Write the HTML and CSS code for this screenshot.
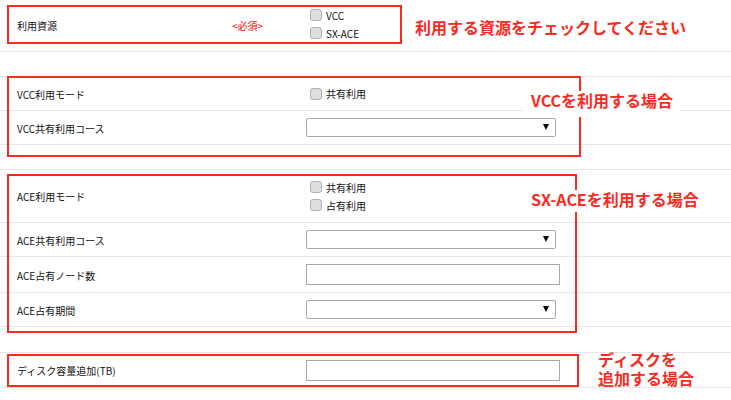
FILE: index.html
```html
<!DOCTYPE html>
<html lang="ja">

<head>
    <meta charset="UTF-8">
    <meta name="viewport" content="width=device-width, initial-scale=1.0">
    <title>利用資源の申請</title>

    <!-- スタイル -->
    <link rel="stylesheet" href="styles.css">
</head>

<body>

    <div class="form">

        <!-- 利用資源 -->
        <section class="group">
            <div class="row row-tall">
                <span class="label">利用資源</span>
                <span class="required">&lt;必須&gt;</span>
                <div class="control checks checks-first">
                    <label class="check"><input type="checkbox">VCC</label>
                    <label class="check"><input type="checkbox">SX-ACE</label>
                </div>
            </div>
            <div class="frame frame-resource"></div>
            <p class="note note-resource">利用する資源をチェックしてください</p>
        </section>

        <!-- VCC -->
        <section class="group">
            <div class="row">
                <span class="label">VCC利用モード</span>
                <div class="control checks">
                    <label class="check"><input type="checkbox">共有利用</label>
                </div>
            </div>
            <div class="row">
                <span class="label">VCC共有利用コース</span>
                <div class="control select"><select></select></div>
            </div>
            <div class="frame frame-vcc"></div>
            <p class="note note-vcc">VCCを利用する場合</p>
        </section>

        <!-- SX-ACE -->
        <section class="group">
            <div class="row row-tall">
                <span class="label">ACE利用モード</span>
                <div class="control checks">
                    <label class="check"><input type="checkbox">共有利用</label>
                    <label class="check"><input type="checkbox">占有利用</label>
                </div>
            </div>
            <div class="row">
                <span class="label">ACE共有利用コース</span>
                <div class="control select"><select></select></div>
            </div>
            <div class="row row-input">
                <span class="label">ACE占有ノード数</span>
                <input type="text" class="control text">
            </div>
            <div class="row">
                <span class="label">ACE占有期間</span>
                <div class="control select"><select></select></div>
            </div>
            <div class="frame frame-ace"></div>
            <p class="note note-ace">SX-ACEを利用する場合</p>
        </section>

        <!-- ディスク -->
        <section class="group">
            <div class="row row-disk">
                <span class="label">ディスク容量追加(TB)</span>
                <input type="text" class="control text">
            </div>
            <div class="frame frame-disk"></div>
            <p class="note note-disk"><span class="note-line">ディスクを</span><span class="note-line">追加する場合</span></p>
        </section>

    </div>

</body>

</html>
```

FILE: styles.css
```css
body {
    font-family: 'Noto Sans CJK JP', sans-serif;
    font-size: 10px;
    margin: 0;
    padding: 0;
    background-color: #fff;
    color: #111;
}

.form {
    margin-top: -2px;
}

.group {
    position: relative;
    border-top: 1px solid #e6e6e6;
    margin-bottom: 24px;
}

.group:last-child {
    margin-bottom: 0;
}

.group:nth-child(3) {
    margin-bottom: 25px;
}

/* 1行 */
.row {
    display: grid;
    grid-template-columns: 215px 74px 1fr;
    align-items: center;
    box-sizing: border-box;
    height: 34px;
    padding-left: 17px;
    border-bottom: 1px solid #e6e6e6;
}

.row-tall {
    height: 53px;
}

.row-input {
    height: 36px;
}

.row-disk {
    height: 35px;
}

.label {
    grid-column: 1;
    padding-top: 1px;
}

.required {
    grid-column: 2;
    color: #f00;
    padding-top: 1px;
}

.control {
    grid-column: 3;
}

/* チェックボックス */
.checks {
    display: flex;
    flex-direction: column;
    padding-left: 4px;
}

.checks-first {
    margin-top: -2px;
}

.check {
    display: flex;
    align-items: center;
    gap: 4px;
    height: 18px;
}

.check input {
    appearance: none;
    margin: 0;
    width: 12px;
    height: 12px;
    box-sizing: border-box;
    border: 1px solid #b2b2b2;
    border-radius: 3px;
    background-color: #dedede;
}

/* セレクト */
.select {
    position: relative;
    width: 250px;
    height: 19px;
}

.select select {
    appearance: none;
    display: block;
    margin: 0;
    width: 250px;
    height: 19px;
    box-sizing: border-box;
    border: 1px solid #a9a9a9;
    border-radius: 2px;
    background-color: #fff;
}

.select::after {
    content: "";
    position: absolute;
    right: 7px;
    top: 6px;
    border-style: solid;
    border-width: 6px 3px 0;
    border-color: #000 transparent transparent;
}

.text {
    display: block;
    margin: 0;
    width: 254px;
    height: 21px;
    box-sizing: border-box;
    border: 1px solid #a9a9a9;
    background-color: #fff;
}

/* 赤枠の注記 */
.frame {
    position: absolute;
    left: 7px;
    box-sizing: border-box;
    border: 2px solid #fa2a1e;
    pointer-events: none;
}

.frame-resource {
    top: 6px;
    width: 395px;
    height: 39px;
}

.frame-vcc {
    top: -1px;
    width: 574px;
    height: 81px;
}

.frame-ace {
    top: 4px;
    width: 570px;
    height: 159px;
}

.frame-disk {
    top: 1px;
    width: 572px;
    height: 33px;
}

.note {
    position: absolute;
    margin: 0;
    background-color: #fff;
    color: #fa2a1e;
    font-size: 16px;
    font-weight: 700;
    line-height: 18px;
    white-space: nowrap;
}

.note-resource {
    left: 415px;
    top: 19px;
}

.note-vcc {
    left: 523px;
    top: 14px;
    padding: 0 8px 8px;
}

.note-ace {
    left: 523px;
    top: 20px;
    padding: 0 8px 4px;
}

.note-disk {
    left: 598px;
    top: -3px;
    display: flex;
    flex-direction: column;
    gap: 1px;
    background-color: transparent;
}

.note-line {
    display: block;
    height: 18px;
}
```
